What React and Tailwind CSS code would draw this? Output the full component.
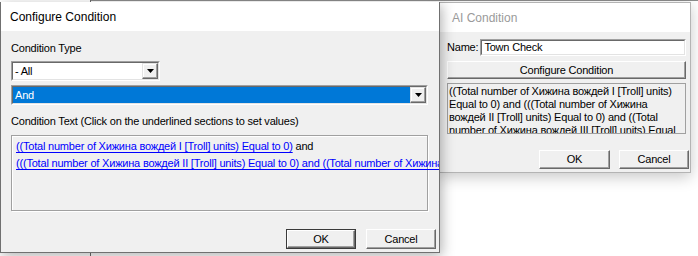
const ff = "font-['Liberation_Sans',Arial,sans-serif]"

function Btn({ children, def, className = '' }) {
  return (
    <div className={`bg-[#f0f0f0] ${def ? 'border border-[#3a3a3a]' : ''} ${className}`}>
      <div className="flex h-full w-full items-center justify-center border border-t-white border-l-white border-r-[#696969] border-b-[#696969] shadow-[inset_-1px_-1px_0_#a0a0a0] text-[11px] tracking-[-0.2px] text-black">
        {children}
      </div>
    </div>
  )
}

function Sunken({ children, className = '' }) {
  return (
    <div className={`border border-t-[#a0a0a0] border-l-[#a0a0a0] border-r-white border-b-white ${className}`}>
      <div className="flex h-full w-full border border-t-[#696969] border-l-[#696969] border-r-[#e3e3e3] border-b-[#e3e3e3]">
        {children}
      </div>
    </div>
  )
}

function DropArrow() {
  return (
    <div className="flex h-full w-[16px] shrink-0 items-center justify-center border border-t-[#e3e3e3] border-l-[#e3e3e3] border-r-[#696969] border-b-[#696969] bg-[#f0f0f0] shadow-[inset_-1px_-1px_0_#a0a0a0,inset_1px_1px_0_#fff]">
      <svg width="7" height="4" viewBox="0 0 7 4">
        <polygon points="0,0 7,0 3.5,4" fill="#000" />
      </svg>
    </div>
  )
}

function Combo({ value, selected, className = '' }) {
  return (
    <Sunken className={`bg-white ${className}`}>
      <div className={`flex flex-1 items-center pl-[2px] text-[11px] tracking-[-0.2px] ${selected ? 'bg-[#0078d7] text-white' : 'text-black'}`}>
        {value}
      </div>
      <DropArrow />
    </Sunken>
  )
}

function Link({ children }) {
  return <span className="text-[#0000ff] underline decoration-[#0000ff] underline-offset-[2px]">{children}</span>
}

export default function App() {
  return (
    <div className={`relative h-[256px] w-[698px] overflow-hidden bg-white ${ff}`}>
      {/* bits of the window behind */}
      <div className="absolute left-[90px] top-0 h-[1px] w-[608px] bg-[#8c8c8c]" />
      <div className="absolute left-[90px] top-0 h-[256px] w-[1px] bg-[#6c6c6c]" />

      {/* AI Condition (inactive) */}
      <div className="absolute left-[439px] top-[2px] z-10 flex h-[171px] w-[252px] flex-col border border-[#b4b4b4] bg-[#f0f0f0] shadow-[0_4px_14px_rgba(0,0,0,0.22)]">
        <div className="flex h-[29px] shrink-0 items-center bg-white pl-[12px] text-[12px] text-[#9a9a9a]">AI Condition</div>
        <div className="flex flex-1 flex-col pl-[7px] pr-[1px]">
          <div className="mt-[7px] flex h-[17px] items-center gap-[2px]">
            <span className="text-[11px] tracking-[-0.2px] text-black">Name:</span>
            <Sunken className="h-[17px] w-[206px] bg-white">
              <span className="flex items-center pl-[2px] text-[11px] tracking-[-0.2px] text-black">Town Check</span>
            </Sunken>
          </div>
          <Btn className="mt-[5px] h-[18px] w-[239px]">Configure Condition</Btn>
          <div className="mt-[4px] h-[51px] w-[239px] overflow-hidden border border-[#a0a0a0] pl-[1px] pt-[1px] text-[11px] leading-[13px] tracking-[-0.2px] text-black">
            <div className="whitespace-nowrap">((Total number of Хижина вождей I [Troll] units)</div>
            <div className="whitespace-nowrap">Equal to 0) and (((Total number of Хижина</div>
            <div className="whitespace-nowrap">вождей II [Troll] units) Equal to 0) and ((Total</div>
            <div className="whitespace-nowrap">number of Хижина вождей III [Troll] units) Equal</div>
          </div>
          <div className="mt-[16px] flex justify-end gap-[9px]">
            <Btn className="h-[19px] w-[71px]">OK</Btn>
            <Btn className="h-[19px] w-[70px]">Cancel</Btn>
          </div>
        </div>
      </div>

      {/* Configure Condition (active) */}
      <div className="absolute left-0 top-[2px] z-20 flex h-[251px] w-[440px] flex-col overflow-hidden border border-t-0 border-[#707070] bg-[#f0f0f0] shadow-[2px_3px_12px_rgba(0,0,0,0.3)]">
        <div className="flex h-[29px] shrink-0 items-center bg-white pl-[9px] text-[12px] text-black">Configure Condition</div>
        <div className="flex flex-1 flex-col pl-[10px]">
          <div className="mt-[11px] h-[13px] text-[11px] leading-[13px] tracking-[-0.2px] text-black">Condition Type</div>
          <Combo value="- All" className="mt-[6px] h-[20px] w-[149px]" />
          <Combo value="And" selected className="mt-[4px] h-[20px] w-[417px]" />
          <div className="mt-[10px] h-[13px] text-[11px] leading-[13px] tracking-[-0.2px] text-black">
            Condition Text (Click on the underlined sections to set values)
          </div>
          <div className="mt-[7px] h-[76px] w-[417px] border border-[#a0a0a0] pl-[4px] pt-[2px] text-[11px] leading-[17px] tracking-[-0.2px] text-black shadow-[1px_1px_0_#fff,inset_1px_1px_0_#fff]">
            <div className="whitespace-nowrap">
              <Link>((Total number of Хижина вождей I [Troll] units) Equal to 0)</Link> and
            </div>
            <div className="whitespace-nowrap">
              <Link>(((Total number of Хижина вождей II [Troll] units) Equal to 0) and ((Total number of Хижина вождей III [Troll] units) Equal to 0))</Link>
            </div>
          </div>
          <div className="mt-[18px] flex justify-end gap-[10px] pr-[3px]">
            <Btn def className="h-[20px] w-[70px]">OK</Btn>
            <Btn className="h-[20px] w-[70px]">Cancel</Btn>
          </div>
        </div>
      </div>
    </div>
  )
}
